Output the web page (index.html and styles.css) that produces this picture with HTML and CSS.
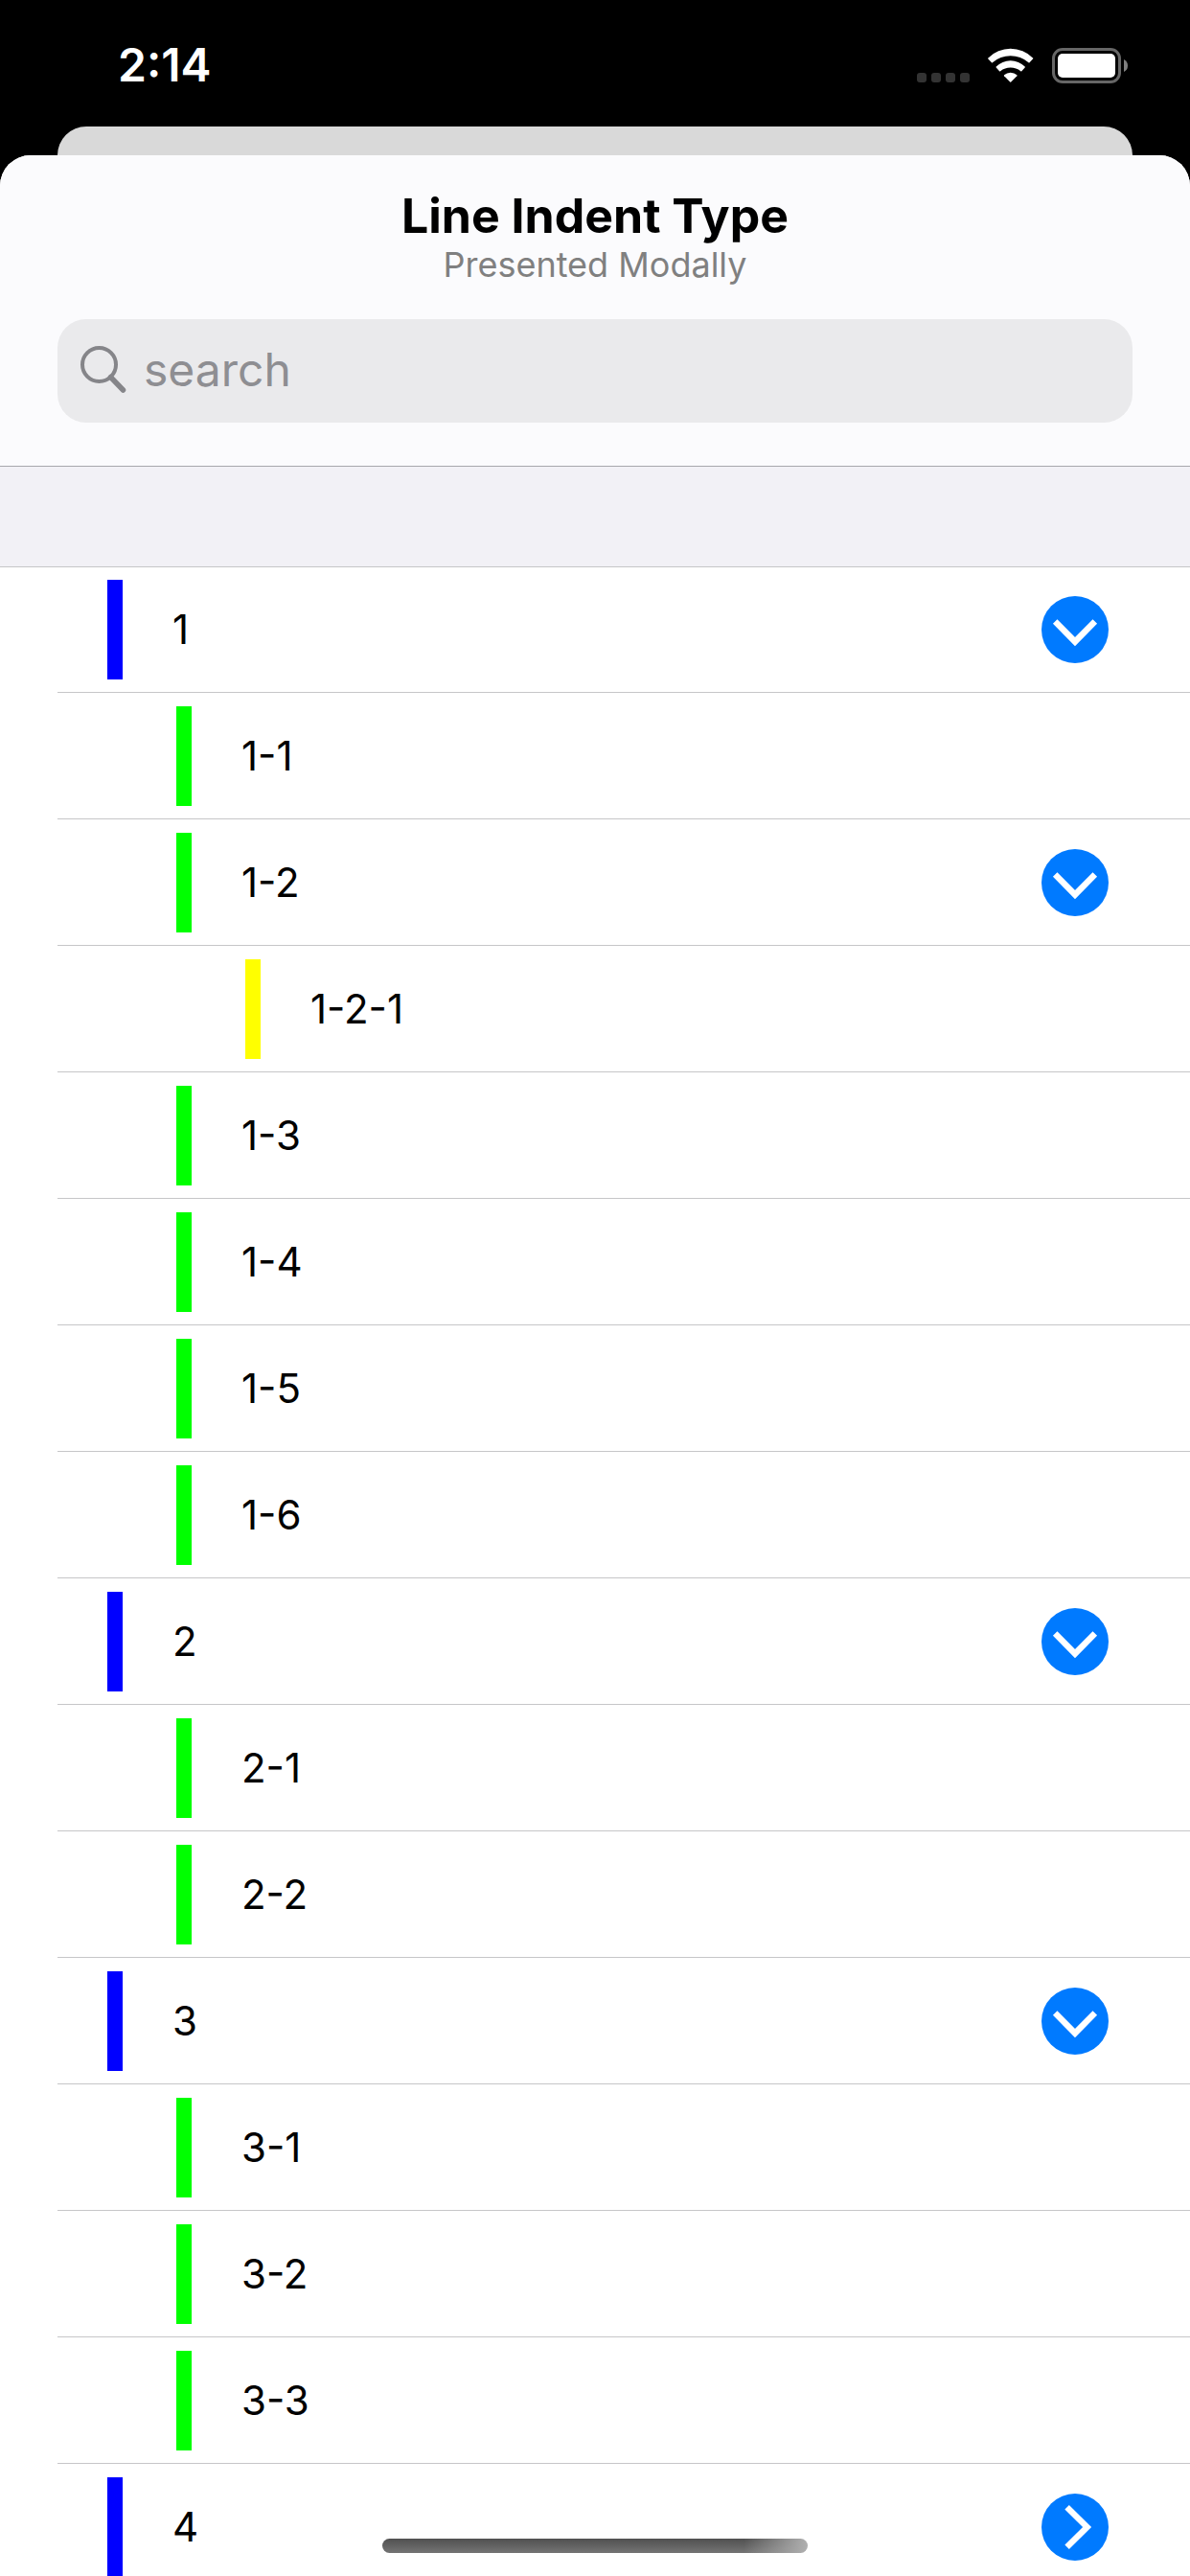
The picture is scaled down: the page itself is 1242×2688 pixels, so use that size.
FILE: index.html
```html
<!DOCTYPE html>
<html lang="en">
<head>
<meta charset="utf-8">
<meta name="viewport" content="width=device-width, initial-scale=1">
<title>Line Indent Type</title>
<link rel="stylesheet" href="styles.css">
</head>
<body>
<svg class="defs" aria-hidden="true">
  <symbol id="chevron" viewBox="0 0 70 70">
    <path d="M14.2 26.6 35 47.6 55.8 26.6" fill="none" stroke="#fff" stroke-width="6.4"/>
  </symbol>
</svg>
<div class="screen">
  <div class="status">
    <span class="time">2:14</span>
    <div class="status-icons">
      <svg class="dots" viewBox="0 0 55 36" fill="#333">
        <rect x="0" y="26" width="10" height="10" rx="3"/>
        <rect x="15" y="26" width="10" height="10" rx="3"/>
        <rect x="30" y="26" width="10" height="10" rx="3"/>
        <rect x="45" y="26" width="10" height="10" rx="3"/>
      </svg>
      <svg class="wifi" viewBox="0 0 48 36" fill="#fff">
        <path d="M0.4 11.6Q-0.3 11 0.4 10.4A33 33 0 0 1 47 10.4Q47.700 11 47 11.600L43.500 15.200Q43 15.600 42.500 15.200A28.700 28.700 0 0 0 4.900 15.200Q4.400 15.600 3.900 15.200Z"/>
        <path d="M8.700 20.400Q8.300 20 8.700 19.600A21 21 0 0 1 38.700 19.600Q39.100 20 38.700 20.400L35.300 24.200Q34.800 24.700 34.300 24.200A17 17 0 0 0 13.100 24.200Q12.600 24.700 12.100 24.200Z"/>
        <path d="M17 29.200Q16.600 28.700 17 28.300A10 10 0 0 1 30.400 28.300Q30.800 28.700 30.400 29.200L24.200 35.600Q23.700 36 23.200 35.600Z"/>
      </svg>
      <svg class="battery" viewBox="0 0 80 37">
        <rect x="1.500" y="1.500" width="69" height="34" rx="9.500" fill="none" stroke="#666" stroke-width="3"/>
        <rect x="6" y="6" width="60" height="25" rx="5" fill="#fff"/>
        <path d="M75 12Q79 14 79 18.500T75 25Z" fill="#808080"/>
      </svg>
    </div>
  </div>
  <div class="card-behind"></div>
  <main class="sheet">
    <header class="header">
      <h1 class="title">Line Indent Type</h1>
      <p class="subtitle">Presented Modally</p>
      <label class="search">
        <svg class="search-icon" viewBox="0 0 48 49" fill="none" stroke="#858589" aria-hidden="true">
          <circle cx="19.500" cy="19.500" r="17.500" stroke-width="4"/>
          <path d="M31.500 32.500 44.500 46" stroke-width="5.500" stroke-linecap="round"/>
        </svg>
        <input class="search-input" type="search" placeholder="search" aria-label="search">
      </label>
    </header>
    <div class="section-gap"></div>
    <ul class="list">
      <li class="row level-1"><span class="label">1</span><button class="toggle" aria-label="Collapse 1"><svg><use href="#chevron"/></svg></button></li>
      <li class="row level-2"><span class="label">1-1</span></li>
      <li class="row level-2"><span class="label">1-2</span><button class="toggle" aria-label="Collapse 1-2"><svg><use href="#chevron"/></svg></button></li>
      <li class="row level-3"><span class="label">1-2-1</span></li>
      <li class="row level-2"><span class="label">1-3</span></li>
      <li class="row level-2"><span class="label">1-4</span></li>
      <li class="row level-2"><span class="label">1-5</span></li>
      <li class="row level-2"><span class="label">1-6</span></li>
      <li class="row level-1"><span class="label">2</span><button class="toggle" aria-label="Collapse 2"><svg><use href="#chevron"/></svg></button></li>
      <li class="row level-2"><span class="label">2-1</span></li>
      <li class="row level-2"><span class="label">2-2</span></li>
      <li class="row level-1"><span class="label">3</span><button class="toggle" aria-label="Collapse 3"><svg><use href="#chevron"/></svg></button></li>
      <li class="row level-2"><span class="label">3-1</span></li>
      <li class="row level-2"><span class="label">3-2</span></li>
      <li class="row level-2"><span class="label">3-3</span></li>
      <li class="row level-1"><span class="label">4</span><button class="toggle closed" aria-label="Expand 4"><svg><use href="#chevron"/></svg></button></li>
    </ul>
  </main>
  <div class="home-indicator"></div>
</div>
</body>
</html>
```
FILE: styles.css
```css
* {
  box-sizing: border-box;
}

body {
  margin: 0;
  background: #000;
  color: #000;
  font-family: Inter, "Liberation Sans", sans-serif;
}

.defs {
  display: none;
}

.screen {
  display: flex;
  flex-direction: column;
  height: 100vh;
}

/* Status bar */
.status {
  display: flex;
  flex: none;
  align-items: center;
  justify-content: space-between;
  height: 132px;
  padding: 4px 64px 0 123px;
}

.time {
  color: #fff;
  font-size: 48px;
  font-weight: 600;
  line-height: 60px;
}

.status-icons {
  display: flex;
  align-items: flex-start;
  gap: 19px;
}

.dots {
  width: 55px;
  height: 36px;
}

.wifi {
  width: 48px;
  height: 36px;
}

.battery {
  width: 80px;
  height: 37px;
}

/* Edge of the presenting screen, seen above the sheet */
.card-behind {
  flex: none;
  height: 30px;
  margin: 0 60px;
  border-radius: 30px 30px 0 0;
  background: #d9d9d9;
}

.sheet {
  display: flex;
  flex: 1;
  flex-direction: column;
  min-height: 0;
  overflow: hidden;
  border-radius: 32px 32px 0 0;
  background: #fff;
}

.header {
  flex: none;
  padding: 33px 60px 45px;
  border-bottom: 1px solid #a8a8ad;
  background: #fbfbfd;
  text-align: center;
}

.title {
  margin: 0;
  font-size: 50px;
  font-weight: 700;
  line-height: 60px;
}

.subtitle {
  margin: 0 0 36px;
  color: #808080;
  font-size: 36px;
  line-height: 42px;
}

.search {
  display: flex;
  align-items: center;
  gap: 18px;
  height: 108px;
  padding: 0 24px 3px;
  border-radius: 30px;
  background: #eaeaec;
}

.search-icon {
  flex: none;
  width: 48px;
  height: 49px;
}

.search-input {
  flex: 1;
  min-width: 0;
  padding: 0;
  border: 0;
  outline: 0;
  background: none;
  font: inherit;
  font-size: 48px;
  line-height: 60px;
}

.search-input::placeholder {
  color: #8e8e92;
  opacity: 1;
}

.section-gap {
  flex: none;
  height: 105px;
  border-bottom: 1px solid #c6c6c8;
  background: #f2f1f6;
}

/* Tree list */
.list {
  flex: 1;
  min-height: 0;
  margin: 0;
  padding: 0 0 0 60px;
  overflow-y: auto;
  scrollbar-width: none;
  list-style: none;
}

.row {
  display: flex;
  align-items: center;
  height: 132px;
  padding-right: 85px;
  border-bottom: 1px solid #c6c6c8;
}

.row:first-child {
  height: 131px;
}

.row::before {
  content: "";
  width: 16px;
  height: 104px;
  margin-right: 52px;
}

.level-1 {
  padding-left: 52px;
}

.level-1::before {
  background: #00f;
}

.level-2 {
  padding-left: 124px;
}

.level-2::before {
  background: #0f0;
}

.level-3 {
  padding-left: 196px;
}

.level-3::before {
  background: #ff0;
}

.label {
  flex: 1;
  font-size: 42px;
  line-height: 52px;
}

.toggle {
  width: 70px;
  height: 70px;
  padding: 0;
  border: 0;
  border-radius: 50%;
  background: #007aff;
}

.toggle svg {
  display: block;
  width: 70px;
  height: 70px;
}

.closed svg {
  transform: rotate(-90deg);
}

.home-indicator {
  position: fixed;
  bottom: 24px;
  left: 50%;
  width: 444px;
  height: 15px;
  margin-left: -222px;
  border-radius: 8px;
  background:
    linear-gradient(to right, transparent 85%, #b0b0b0),
    linear-gradient(#505050, #747474);
}
```
